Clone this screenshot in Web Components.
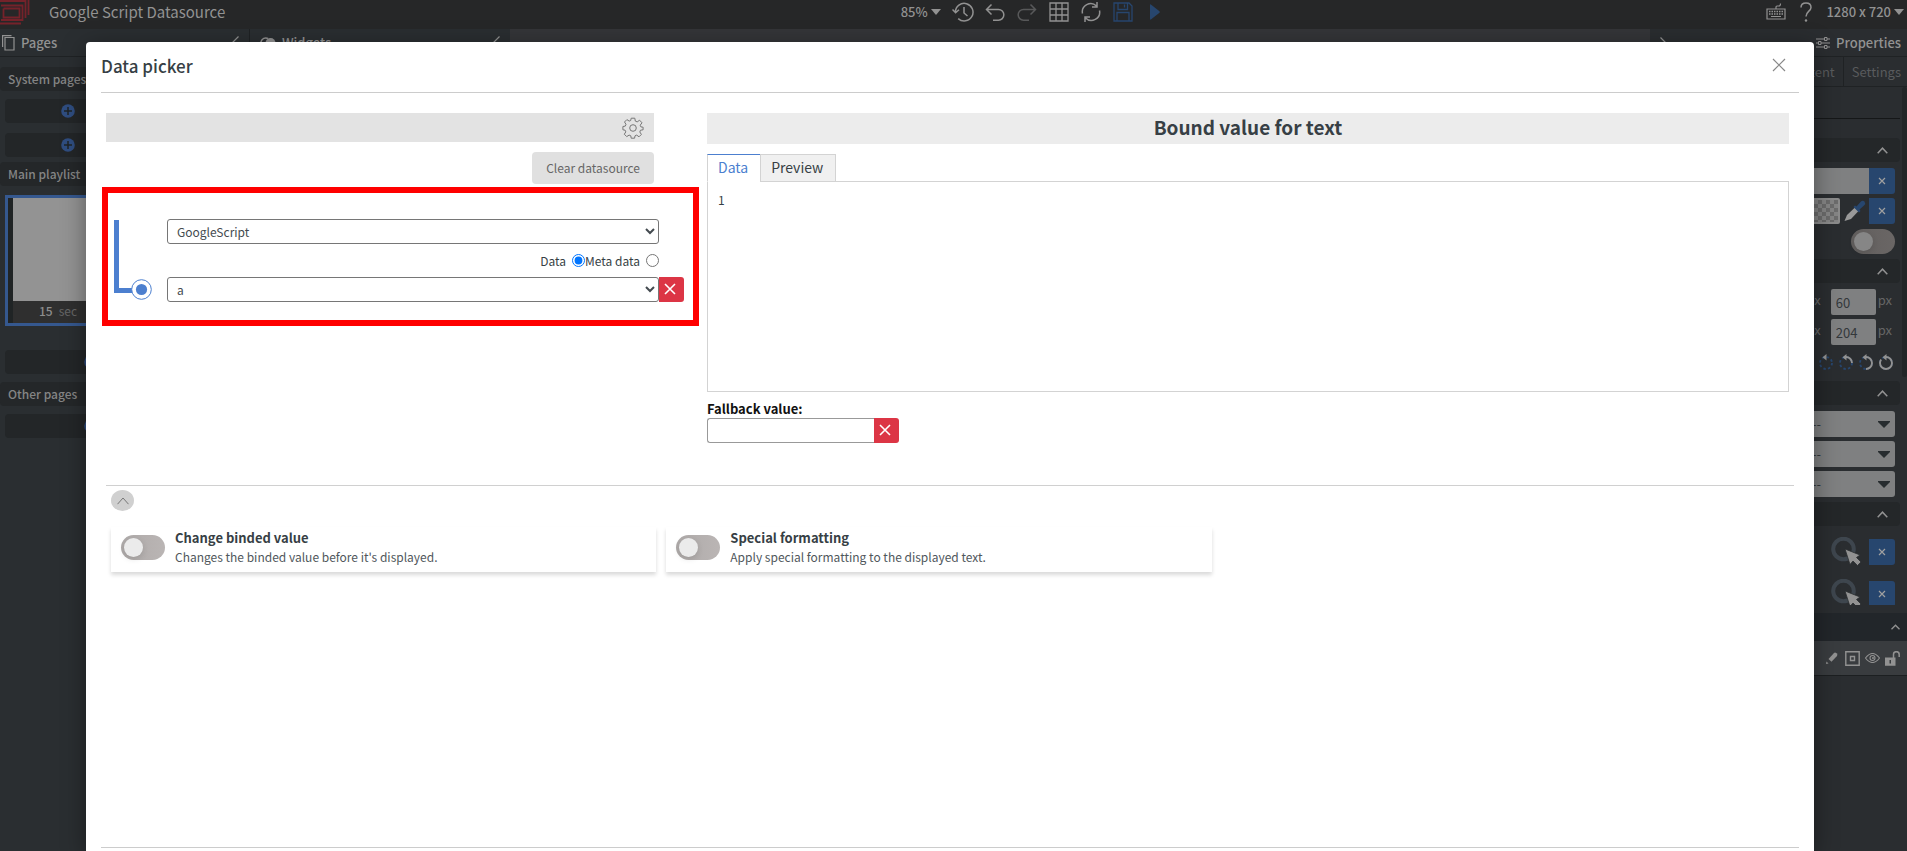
<!DOCTYPE html>
<html lang="en">
<head>
<meta charset="utf-8">
<title>Google Script Datasource</title>
<style>
html, body { margin: 0; height: 100%; }
body {
  overflow: hidden;
  font-family: "Noto Sans CJK SC", "Noto Sans", sans-serif;
  font-size: 12px; line-height: 20px; color: #373f45;
}
</style>
</head>
<body>
<studio-app></studio-app>
<script>
const define = (name, html, setup) => {
  const tpl = document.createElement('template');
  tpl.innerHTML = '<style>*{box-sizing:border-box}:host{box-sizing:border-box}button,input,select{font:inherit;color:inherit;margin:0}button{padding:0;border:0;background:none}</style>' + html;
  customElements.define(name, class extends HTMLElement {
    constructor() {
      super();
      this.attachShadow({ mode: 'open' }).append(tpl.content.cloneNode(true));
    }
    connectedCallback() { if (setup) setup(this, this.shadowRoot); }
  });
};

/* [width, height, markup] */
const s = (d, w = 1.5) => `<path d="${d}" fill="none" stroke="currentColor" stroke-width="${w}"/>`;
const ICONS = {
  logo: [30, 25, s('M1 5.5H22.5V20H1M3.5 8.5H19.5V17.5H3.5V8.5M0 1H25.5V18M4 -2H28.5V15M0 23.5H21', 1.8)],
  caret: [10, 6, '<path d="M0 0H10L5 6Z" fill="currentColor"/>'],
  bigcaret: [12, 7, '<path d="M0 0H12V1L6 7L0 1Z" fill="currentColor"/>'],
  history: [22, 20, s('M3.4 10A8.8 8.8 0 1 1 6.2 16.6M0.5 7.5L3.6 10.8L7 7.8M12 5V11L15.5 14')],
  undo: [20, 20, s('M6.5 2.5L1.5 7.5L6.5 12.500M1.5 7.500H13.500A5.300 5.300 0 0 1 13.500 18.200H8')],
  redo: [20, 20, s('M13.500 2.500L18.500 7.500L13.500 12.500M18.500 7.500H6.500A5.300 5.300 0 0 0 6.500 18.200H12')],
  grid: [20, 20, s('M1 1H19V19H1ZM1 7H19M1 13H19M7 1V19M13 1V19', 1.3)],
  refresh: [20, 20, s('M1.500 11.500A8.300 8.300 0 0 1 15.500 4M18.500 8.500A8.300 8.300 0 0 1 4.500 16M16 0V5H11M4 20V15H9')],
  save: [20, 20, s('M1 1H16L19 4V19H1ZM5 1V7.500H14.500V1M11.500 2.500V5.500M4 19V10.500H16V19', 1.3)],
  play: [10, 16, '<path d="M0 1.500Q0 -.5 1.500 1L9.500 7.200Q10 8 9.500 8.800L1.500 15Q0 16.500 0 14.500Z" fill="currentColor"/>'],
  keyboard: [20, 18, s('M1 6H19V16H1ZM10 6V4Q10 3 11 3H13Q14.500 3 14.500 .5M5 13.500H15', 1.2) + '<path d="M3 8.500H17.500M3 11H17.500" stroke="currentColor" stroke-width="1.500" stroke-dasharray="1.500 1"/>'],
  help: [12, 20, s('M1 5.500Q1 1 6 1Q11 1 11 5.500C11 9 6 9.500 6 14.500', 1.5) + '<circle cx="6" cy="18.500" r="1.200" fill="currentColor"/>'],
  pages: [13, 16, s('M3 2.500H12V15H3ZM.600 12V.600H9.500', 1.2)],
  widgets: [16, 12, '<circle cx="10.500" cy="6" r="5" fill="currentColor"/>' + s('M5.500 11A5 5 0 1 1 8 1.500', 1.4)],
  left: [7, 12, s('M6.500 .5L1 6L6.500 11.500', 1.2)],
  right: [7, 12, s('M.5 .5L6 6L.5 11.500', 1.2)],
  up: [11, 7, s('M.700 6.200L5.500 1.200L10.300 6.200', 1.5)],
  upsmall: [9, 6, s('M.500 5.300L4.500 1.200L8.500 5.300', 1.3)],
  upthin: [12, 8, s('M.500 7.200L6 1L11.500 7.200', 1)],
  sliders: [14, 12, s('M0 2H8M11 2H14M0 6H2M5 6H14M0 10H8M11 10H14', 1.2) + s('M8.500 .500H11V3.500H8.500ZM2.500 4.500H5V7.500H2.500ZM8.500 8.500H11V11.500H8.500Z', 1)],
  plus: [14, 14, '<circle cx="7" cy="7" r="6.800" fill="currentColor"/><path d="M3 7H11M7 3V11" stroke="#1f2426" stroke-width="1.500"/>'],
  x: [8, 8, s('M1 1L7 7M7 1L1 7', 1.2)],
  cross: [12, 12, s('M1 1L11 11M11 1L1 11', 1.6)],
  close: [14, 14, s('M1 1L13 13M13 1L1 13', 1.2)],
  gear: [22, 22, s('M9.2 1.2H12.8L13.300 4.100L15.200 4.900L17.600 3.200L20 5.800L18.200 8.200L18.900 9.900L21.100 10.200V12.800L18.500 13.200L17.800 15L19.400 17.400L17 19.800L14.700 18.100L13 18.800L12.600 21.200H9.200L8.800 18.800L7.100 18.100L4.700 19.600L2.300 17.200L3.800 14.900L3.100 13.200L.9 12.800V9.500L3.300 9.100L4 7.300L2.500 5L4.900 2.600L7.200 4.100L8.700 3.500Z', 1) + '<circle cx="11" cy="11" r="3.300" fill="none" stroke="currentColor"/>'],
  dropper: [22, 22, '<path d="M0.500 21L3 15L11 7.500L14.500 11L7 19Z" fill="#999"/><path d="M9.500 7L11 5.500L12.500 6.500L16.500 2Q18.500 0 20.500 1.500Q22 3.500 20 5.500L15.500 9.500L16.500 11L15 12.500Z" fill="#27466e"/>'],
  select: [31, 30, '<circle cx="12.500" cy="12" r="10.300" fill="none" stroke="#3e464e" stroke-width="4"/><path d="M14 12L29 18L25.500 20.500L30 25L26.500 28.500L22 24L19 27.500Z" fill="#929292" stroke="#2a2d30" stroke-width=".800"/>'],
  pencil: [12, 12, '<path d="M2.500 7L8 1Q9 0 10.500 1.200T11 4L5.500 9.700Z" fill="currentColor"/><path d="M0 12L.5 9.500L2.500 11.500Z" fill="currentColor"/>'],
  box: [15, 15, s('M.800 .800H14.200V14.200H.800ZM5.500 5.500H9.500V9.500H5.500Z', 1.4)],
  eye: [15, 10, s('M.500 5Q7.500 -4 14.500 5Q7.500 14 .500 5Z', 1.1) + '<circle cx="7.500" cy="5" r="2.500" fill="none" stroke="currentColor" stroke-width="1.100"/><circle cx="8" cy="5" r="1" fill="currentColor"/>'],
  unlock: [15, 15, '<path fill-rule="evenodd" d="M0 6.500H10.500V14.800H0ZM4.500 9V12.500H6V9Z" fill="currentColor"/>' + s('M8.500 7V3.500A2.800 2.800 0 0 1 14.200 3.500V6', 1.5)],
};
const rot = n => {
  const c = 44, on = c * n;
  return `<circle cx="7" cy="9" r="6" fill="none" stroke="#27466e" stroke-width="1.800" stroke-dasharray="2.500 2.200"/>` +
    (n ? `<circle cx="7" cy="9" r="6" fill="none" stroke="#929292" stroke-width="1.900" pathLength="44" stroke-dasharray="${on} ${c}" transform="rotate(-90 7 9)"/>` : '') +
    `<path d="M3.500 3.200L7.500 0V6.400Z" fill="#929292"/>`;
};
[0, .25, .5, .85].forEach((n, i) => ICONS['rot' + i] = [14, 16, rot(n)]);

customElements.define('ui-icon', class extends HTMLElement {
  connectedCallback() {
    const [w, h, body] = ICONS[this.getAttribute('name')];
    if (!this.shadowRoot) this.attachShadow({ mode: 'open' });
    this.shadowRoot.innerHTML = `<style>:host{display:inline-flex;flex:none}svg{display:block}</style><svg width="${w}" height="${h}" viewBox="0 0 ${w} ${h}" aria-hidden="true">${body}</svg>`;
  }
});

define('ui-toggle', `<style>
:host{display:block;flex:none;width:44px;height:25px}
input{appearance:none;display:block;width:100%;height:100%;border-radius:13px;background:var(--track,linear-gradient(90deg,#aeaaa9,#bab5b4));padding:3px}
input::before{content:"";display:block;width:19px;height:19px;border-radius:50%;background:var(--knob,#ebebeb);box-shadow:0 2px 6px rgba(0,0,0,.12)}
</style><input type="checkbox" role="switch">`,
(el, r) => r.querySelector('input').setAttribute('aria-label', el.getAttribute('label') || ''));

define('top-bar', `<style>
:host{display:grid;grid-template-columns:minmax(0,603fr) auto minmax(0,497fr);height:29px;background:#262728;color:#929292;font-size:13px;font-weight:500}
:host>div{display:flex;align-items:center;height:24px}
.brand ui-icon{color:#75222a;width:49px}
h1{margin:0;font-size:15px;font-weight:400;line-height:20px}
.tools button,.right button{display:flex;justify-content:center;align-items:center;width:20px;height:20px}
.tools{gap:12px}
.tools .zoom,.right .size{width:auto;gap:3px}
.dim{color:#58595a}.blue{color:#27466e}
.right{justify-content:flex-end;padding-right:3px;gap:10px}
</style>
<div class="brand"><ui-icon name="logo"></ui-icon><h1>Google Script Datasource</h1></div>
<div class="tools">
<button class="zoom">85%<ui-icon name="caret"></ui-icon></button>
<button aria-label="History"><ui-icon name="history"></ui-icon></button>
<button aria-label="Undo"><ui-icon name="undo"></ui-icon></button>
<button class="dim" aria-label="Redo"><ui-icon name="redo"></ui-icon></button>
<button aria-label="Grid"><ui-icon name="grid"></ui-icon></button>
<button aria-label="Refresh"><ui-icon name="refresh"></ui-icon></button>
<button class="blue" aria-label="Save"><ui-icon name="save"></ui-icon></button>
<button class="blue" aria-label="Play"><ui-icon name="play"></ui-icon></button>
</div>
<div class="right">
<button aria-label="Keyboard shortcuts"><ui-icon name="keyboard"></ui-icon></button>
<button aria-label="Help"><ui-icon name="help"></ui-icon></button>
<button class="size">1280 x 720<ui-icon name="caret"></ui-icon></button>
</div>`);

define('panel-head', `<style>
:host{display:flex;align-items:center;height:28px;gap:6px;padding:0 10px 0 2px;border-bottom:1px solid #1f2224;color:#929292;font-size:13px;font-weight:500}
slot[name=end]{display:block}.grow{flex:1}
</style><slot></slot><span class="grow"></span><slot name="end"></slot>`);

define('pages-panel', `<style>
:host{display:block;flex:none;width:250px;border-right:1px solid #1f2224;background:#2a2e31;color:#858585}
h3{margin:8px 0;height:24px;padding:0 8px;border-radius:4px;background:#242729;font-size:12px;font-weight:500;line-height:24px}
h3:first-of-type{margin-top:10px}
.add{display:flex;align-items:center;width:239px;height:24px;margin:0 5px 10px;padding-left:56px;border-radius:4px;background:#232628;color:#2f4d80}
.add.far{padding-left:79px}
.add + h3{margin-top:-5px}
.thumb{margin:9px 5px 24px;border:3px solid #35588f;background:#202425;padding:0 5px;height:131px}
.thumb .page{height:103px;background:#939393}
.thumb p{margin:0;height:22px;background:#2f2f2f;padding-left:26px;color:#666;font-size:12px;line-height:20px}
b{font-weight:500;color:#8d8d8d;margin-right:6px}
.far + h3{margin-top:-2px}
</style>
<panel-head><ui-icon name="pages"></ui-icon><span>Pages</span><ui-icon slot="end" name="left"></ui-icon></panel-head>
<h3>System pages</h3>
<button class="add" aria-label="Add master page"><ui-icon name="plus"></ui-icon></button>
<button class="add" aria-label="Add popup page"><ui-icon name="plus"></ui-icon></button>
<h3>Main playlist</h3>
<div class="thumb"><div class="page"></div><p><b>15</b>sec</p></div>
<button class="add far" aria-label="Add page"><ui-icon name="plus"></ui-icon></button>
<h3>Other pages</h3>
<button class="add far" aria-label="Add other page"><ui-icon name="plus"></ui-icon></button>`);

define('widgets-panel', `<style>
:host{display:block;flex:none;width:260px;background:#2a2e31}
panel-head{padding-left:10px}
</style><panel-head><ui-icon name="widgets"></ui-icon><span>Widgets</span><ui-icon slot="end" name="left"></ui-icon></panel-head>`);

define('prop-section', `<style>
:host{display:flex;justify-content:flex-end;align-items:center;height:24px;margin:5px 7px 6px 0;padding-right:12px;border-radius:4px;background:#242729;color:#929292}
button{display:flex}
</style><button aria-label="Collapse section"><ui-icon name="up"></ui-icon></button>`);

define('prop-row', `<style>
:host{display:flex;justify-content:flex-end;align-items:center;height:26px;margin:0 12px 4px 0;color:#666}
</style><slot></slot>`);

define('x-button', `<style>
:host{display:block;flex:none}
button{display:flex;align-items:center;justify-content:center;width:26px;height:26px;border-radius:0 3px 3px 0;background:#27466e;color:#a0a0a0}
</style><button aria-label="Clear"><ui-icon name="x"></ui-icon></button>`);

define('prop-select', `<style>
:host{display:block;position:relative;width:210px}
select{appearance:none;display:block;width:100%;height:26px;border:0;border-radius:3px;background:#7f8081;color:#33383b;padding:0 74px 0 5px;font-size:13px;text-align-last:right}
ui-icon{position:absolute;right:5px;top:10px;color:#272c2f;pointer-events:none}
</style><select aria-label="Binding"><option>------</option></select><ui-icon name="bigcaret"></ui-icon>`);

define('properties-panel', `<style>
:host{display:block;flex:none;width:257px;background:#2a2d30;color:#666;font-size:13px}
panel-head{padding:0 6px 0 10px}
.title{display:flex;align-items:center;gap:6px}
.tabs{display:flex;justify-content:flex-end;height:30px;border-bottom:1px solid #1f2224}
.tabs button{padding:0 8px;height:29px;color:#595b5d;font-size:13px;line-height:28px}
.tabs button+button{border-left:1px solid #1f2224;padding-right:6px}
.body{display:flex;align-items:flex-start}
.props{flex:1}
.thumb{width:5px;height:290px;border-radius:4px;background:#222527;margin-left:-5px}
hr{margin:31px 7px 19px 0;border:0;border-top:1px solid #151718}
input{width:45px;height:26px;border:0;border-radius:2px;background:#7f8081;color:#33383b;padding:0 5px;font-size:13px}
label{display:flex;gap:2px;padding-right:3px;line-height:22px}
label input{margin-left:8px}
.wide{width:180px;border-radius:3px 0 0 3px}
.checker{width:100px;height:26px;border:2px solid #8b8b8b;border-radius:2px;background:repeating-conic-gradient(#6c6c6c 0 25%,#858585 0 50%) 0 0/8px 8px;margin-right:4px}
.drop{margin-right:3px}
ui-toggle{--track:linear-gradient(90deg,#625f5e,#6a6665);--knob:#868686}
.spin{gap:6px;margin:0 14px 6px 0}
.pick{margin-bottom:16px}
.pick.first{margin-top:13px}
.pick ui-icon{margin-right:7px}
.pick.last{margin-bottom:6px;clip-path:inset(-4px 0 2px 0)}
.layers{display:flex;justify-content:flex-end;align-items:center;height:28px;padding-right:7px;background:#22262a;color:#929292}
.layer{display:flex;justify-content:flex-end;align-items:center;gap:5px;height:35px;padding-right:7px;background:#393c3f;color:#929292;border-bottom:1px solid #1c1f21}
.layer ui-icon:first-child{margin-right:2px}
</style>
<panel-head><ui-icon name="right"></ui-icon><span class="title" slot="end"><ui-icon name="sliders"></ui-icon>Properties</span></panel-head>
<div class="tabs"><button>Content</button><button>Settings</button></div>
<div class="body"><div class="props">
<hr>
<prop-section></prop-section>
<prop-row><input class="wide" aria-label="Value"><x-button></x-button></prop-row>
<prop-row><span class="checker"></span><ui-icon class="drop" name="dropper"></ui-icon><x-button></x-button></prop-row>
<prop-row><ui-toggle label="Enabled"></ui-toggle></prop-row>
<prop-section></prop-section>
<prop-row><label>px<input value="60" aria-label="Width">px</label></prop-row>
<prop-row><label>px<input value="204" aria-label="Height">px</label></prop-row>
<prop-row class="spin"><ui-icon name="rot0"></ui-icon><ui-icon name="rot1"></ui-icon><ui-icon name="rot2"></ui-icon><ui-icon name="rot3"></ui-icon></prop-row>
<prop-section></prop-section>
<prop-row><prop-select></prop-select></prop-row>
<prop-row><prop-select></prop-select></prop-row>
<prop-row><prop-select></prop-select></prop-row>
<prop-section></prop-section>
<prop-row class="pick first"><ui-icon name="select"></ui-icon><x-button></x-button></prop-row>
<prop-row class="pick last"><ui-icon name="select"></ui-icon><x-button></x-button></prop-row>
</div><div class="thumb"></div></div>
<div class="layers"><ui-icon name="upsmall"></ui-icon></div>
<div class="layer"><ui-icon name="pencil"></ui-icon><ui-icon name="box"></ui-icon><ui-icon name="eye"></ui-icon><ui-icon name="unlock"></ui-icon></div>`);

define('red-button', `<style>
:host{display:block;flex:none}
button{display:flex;align-items:center;justify-content:center;width:25px;height:25px;padding:0 3px 1px 0;border-radius:0 3px 3px 0;background:#dc3545;color:#fff}
</style><button aria-label="Remove"><ui-icon name="cross"></ui-icon></button>`);

define('source-picker', `<style>
:host{display:block}
.bar{display:flex;justify-content:flex-end;align-items:center;height:29px;padding-right:10px;background:#e3e3e3;color:#777}
.bar button{display:flex}
.clear{display:block;margin:10px 0 3px auto;height:32px;padding:0 14px;border-radius:4px;background:#e0e0e0;color:#666}
.frame{display:grid;grid-template-columns:53px minmax(0,1fr) 25px;grid-template-rows:25px 33px 25px;margin:0 -45px 0 -4px;border:6px solid #f00;padding:26px 9px 18px 6px}
.link{grid-row:1/4}
select{width:100%;height:25px;border:1px solid #767676;border-radius:3px;background:#fff;color:#444b50;padding:0 5px}
.kind{grid-column:2;display:flex;justify-content:flex-end;align-items:center;color:#373f45}
.kind label{display:flex;align-items:center;gap:6px}
.kind input{width:13px;height:13px}
.first{grid-column:2/3}
.second{grid-column:2}
svg{display:block}
</style>
<div class="bar"><button aria-label="Datasource settings"><ui-icon name="gear"></ui-icon></button></div>
<button class="clear">Clear datasource</button>
<div class="frame">
<svg class="link" width="40" height="82" viewBox="0 0 40 82" aria-hidden="true"><path d="M2.500 1V71.500H18" fill="none" stroke="#4c7fcf" stroke-width="5"/><circle cx="27.500" cy="70.500" r="9.800" fill="#fff" stroke="#4c7fcf"/><circle cx="27.500" cy="70.500" r="5.600" fill="#4c7fcf"/></svg>
<select class="first" aria-label="Datasource"><option>GoogleScript</option></select>
<div class="kind"><label>Data<input type="radio" name="kind" checked></label><label>Meta data<input type="radio" name="kind"></label></div>
<select class="second" aria-label="Field"><option>a</option></select>
<red-button></red-button>
</div>`);

define('bound-value', `<style>
:host{display:block}
h2{margin:0 0 10px;height:31px;background:#ececec;font-size:19px;font-weight:700;line-height:28px;text-align:center}
.tabs{display:flex}
.tabs button{height:28px;padding:0 12px 2px 10px;margin-bottom:-1px;border:1px solid #d3d3d3;background:#f0f0f0;font-size:14px;line-height:22px}
.tabs .on{border-top-color:#4c7fcf;border-bottom-color:#fff;border-right:0;background:#fff;color:#4c7fcf}
.out{height:211px;border:1px solid #d3d3d3;padding:8px 10px}
label{display:block;margin-top:8px;height:18px;font-size:13px;font-weight:700;color:#111;line-height:18px}
.field{display:flex}
input{width:167px;height:25px;border:1px solid #999;border-right:0;border-radius:3px 0 0 3px;padding:0 5px}
</style>
<h2>Bound value for text</h2>
<div class="tabs"><button class="on">Data</button><button>Preview</button></div>
<div class="out">1</div>
<label for="fb">Fallback value:</label>
<div class="field"><input id="fb" type="text"><red-button></red-button></div>`);

define('option-card', `<style>
:host{display:flex;align-items:center;gap:10px;height:45px;padding:0 10px 5px;background:#fff;box-shadow:0 3px 4px rgba(0,0,0,.15)}
.t{line-height:19px;color:#50575c}
slot[name=title]{display:block;color:#373f45;font-size:13px;font-weight:700}
</style><ui-toggle></ui-toggle><div class="t"><slot name="title"></slot><slot></slot></div>`,
(el, r) => r.querySelector('ui-toggle').shadowRoot.querySelector('input').setAttribute('aria-label', el.querySelector('[slot=title]')?.textContent || 'Option'));

define('data-picker', `<style>
:host{display:flex;flex-direction:column;background:#fff;border-radius:4px 4px 0 0;box-shadow:0 5px 25px rgba(0,0,0,.4);padding:0 15px}
header{display:flex;justify-content:space-between;height:51px;border-bottom:1px solid #ccc}
header h2{margin:0;font-size:17px;font-weight:500;line-height:48px}
header button{width:14px;height:46px;margin-right:13px;display:flex;align-items:center;color:#888}
main{flex:1;padding:20px 5px 0}
.cols{display:grid;grid-template-columns:minmax(0,548fr) minmax(0,1082fr);gap:53px;padding:0 5px 0 0}
hr{margin:42px 0 4px;border:0;border-top:1px solid #d0d0d0}
.fold{display:flex;align-items:center;justify-content:center;width:23px;height:21px;margin-left:5px;border-radius:50%;background:#d0d0d0;color:#777}
.cards{display:grid;grid-template-columns:repeat(2,minmax(0,1fr));gap:10px;width:65.5%;margin:16px 0 0;padding-left:5px}
footer{height:4px;border-top:1px solid #ccc}
</style>
<header><h2>Data picker</h2><button aria-label="Close"><ui-icon name="close"></ui-icon></button></header>
<main>
<div class="cols"><source-picker></source-picker><bound-value></bound-value></div>
<hr>
<button class="fold" aria-label="Collapse options"><ui-icon name="upthin"></ui-icon></button>
<div class="cards">
<option-card><span slot="title">Change binded value</span>Changes the binded value before it's displayed.</option-card>
<option-card><span slot="title">Special formatting</span>Apply special formatting to the displayed text.</option-card>
</div>
</main>
<footer></footer>`);

define('studio-app', `<style>
:host{display:flex;flex-direction:column;height:100vh;position:relative;overflow:hidden;background:#343538}
.work{display:flex;flex:1;min-height:0}
.canvas{flex:1}
data-picker{position:absolute;inset:42px 93px 0 86px}
</style>
<top-bar></top-bar>
<div class="work"><pages-panel></pages-panel><widgets-panel></widgets-panel><div class="canvas"></div><properties-panel></properties-panel></div>
<data-picker></data-picker>`);
</script>
</body>
</html>
